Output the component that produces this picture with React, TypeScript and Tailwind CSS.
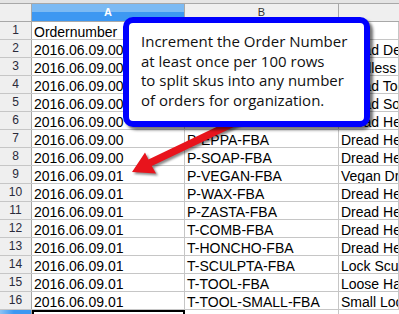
import React from 'react'

const rows = [
  ['Ordernumber', '', ''],
  ['2016.06.09.00', '', 'Dread Detox Shampoo'],
  ['2016.06.09.00', '', 'Dredless Dread Kit'],
  ['2016.06.09.00', '', 'Dread Tool'],
  ['2016.06.09.00', '', 'Dread Soap'],
  ['2016.06.09.00', '', 'Dread Head Wax'],
  ['2016.06.09.00', 'P-EPPA-FBA', 'Dread Head Peppa'],
  ['2016.06.09.00', 'P-SOAP-FBA', 'Dread Head Soap'],
  ['2016.06.09.01', 'P-VEGAN-FBA', 'Vegan Dread Wax'],
  ['2016.06.09.01', 'P-WAX-FBA', 'Dread Head Wax'],
  ['2016.06.09.01', 'P-ZASTA-FBA', 'Dread Head Zasta'],
  ['2016.06.09.01', 'T-COMB-FBA', 'Dread Head Comb'],
  ['2016.06.09.01', 'T-HONCHO-FBA', 'Dread Head Honcho'],
  ['2016.06.09.01', 'T-SCULPTA-FBA', 'Lock Sculpta'],
  ['2016.06.09.01', 'T-TOOL-FBA', 'Loose Hair Tool'],
  ['2016.06.09.01', 'T-TOOL-SMALL-FBA', 'Small Lock Tool'],
]

const cell = 'h-full border-r border-[#c6c6c6] flex items-end pl-[2px] leading-[13px] whitespace-nowrap overflow-hidden'

function CellText({ text, col }: { text: string; col: number }) {
  if (col === 0 && text === 'Ordernumber') {
    return <span className="underline decoration-wavy decoration-[#e02020] decoration-1 underline-offset-[3px]">{text}</span>
  }
  if (col === 2 && text.startsWith('Dredless')) {
    return (
      <span>
        <span className="underline decoration-wavy decoration-[#e02020] decoration-1 underline-offset-[3px]">Dredless</span> Dread Kit
      </span>
    )
  }
  if (col === 2 && text.startsWith('Lock ')) {
    return (
      <span>
        Lock <span className="underline decoration-wavy decoration-[#e02020] decoration-1 underline-offset-[3px]">Sculpta</span>
      </span>
    )
  }
  return <span>{text}</span>
}

export default function App() {
  return (
    <div className="relative w-[399px] h-[314px] overflow-hidden bg-white text-black" style={{ fontFamily: '"Liberation Sans", Arial, sans-serif' }}>
      <div className="h-[4px] bg-[#e4e4e4] border-b border-[#a8a8a8]" />

      {/* column headers */}
      <div className="grid grid-cols-[32px_153px_154px_1fr] h-[18px] bg-[#efefef] border-b border-[#a8a8a8] text-[11px]">
        <div className="border-r border-[#a8a8a8]" />
        <div className="border-r border-[#a8a8a8] flex items-center justify-center font-bold text-white bg-[linear-gradient(#7cbaf3_0%,#7cbaf3_50%,#3d98f2_50%,#3d98f2_100%)]">A</div>
        <div className="border-r border-[#a8a8a8] flex items-center justify-center text-[#333]">B</div>
        <div />
      </div>

      {rows.map((r, i) => (
        <div key={i} className="grid grid-cols-[32px_153px_154px_1fr] h-[18px] border-b border-[#c6c6c6] text-[14px]">
          <div className="h-full bg-[#efefef] border-r border-[#a8a8a8] flex items-end justify-center pb-[3px] text-[12px] leading-[12px] text-[#2a2a3a]">{i + 1}</div>
          {r.map((t, c) => (
            <div key={c} className={cell}>
              <CellText text={t} col={c} />
            </div>
          ))}
        </div>
      ))}

      {/* row 17 with active cell */}
      <div className="grid grid-cols-[32px_153px_154px_1fr] h-[18px]">
        <div className="h-full border-r border-[#a8a8a8] bg-[linear-gradient(90deg,#8cc3f5,#3d98f2_45%)]" />
        <div className="h-full border-2 border-black" />
        <div className="h-full border-r border-[#c6c6c6]" />
        <div />
      </div>

      {/* red arrow */}
      <svg className="absolute left-0 top-0 pointer-events-none drop-shadow-[2px_2px_1px_rgba(0,0,0,0.45)]" width="399" height="314" viewBox="0 0 399 314">
        <polygon
          points="132,172 145,152.5 148.4,159.4 238.9,116.3 242.1,123.1 151.8,166 156,173.5"
          fill="#e8141c"
        />
      </svg>

      {/* callout */}
      <div className="absolute left-[123px] top-[17px] w-[247px] h-[110px] rounded-[10px] border-[6px] border-[#0000ff] bg-white shadow-[3px_3px_3px_rgba(0,0,0,0.55)] pl-[12px] pt-[9px] text-[15px] leading-[19.5px] text-[#111]" style={{ fontFamily: '"Open Sans", "Noto Sans", sans-serif' }}>
        <div>Increment the Order Number</div>
        <div>at least once per 100 rows</div>
        <div>to split skus into any number</div>
        <div>of orders for organization.</div>
      </div>
    </div>
  )
}
